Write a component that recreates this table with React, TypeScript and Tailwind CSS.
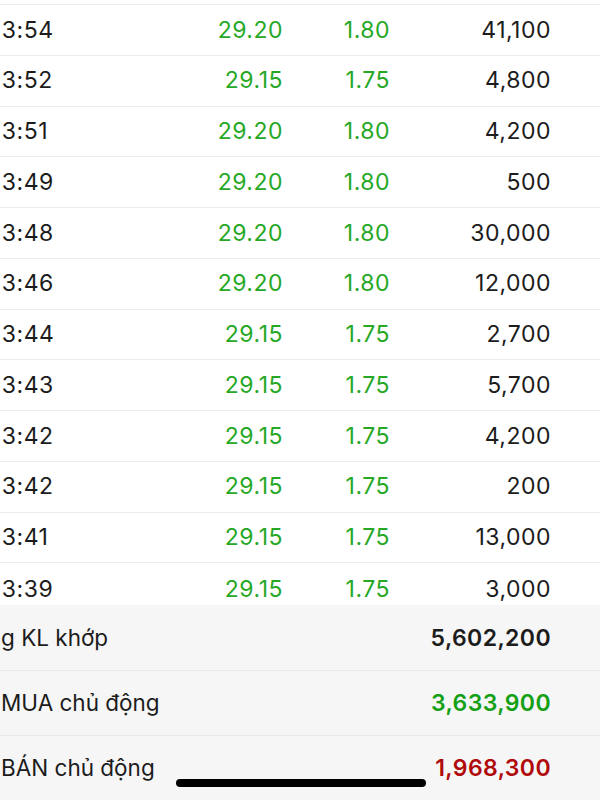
const rows = [
	{ time: "13:54", price: "29.20", change: "1.80", vol: "41,100" },
	{ time: "13:52", price: "29.15", change: "1.75", vol: "4,800" },
	{ time: "13:51", price: "29.20", change: "1.80", vol: "4,200" },
	{ time: "13:49", price: "29.20", change: "1.80", vol: "500" },
	{ time: "13:48", price: "29.20", change: "1.80", vol: "30,000" },
	{ time: "13:46", price: "29.20", change: "1.80", vol: "12,000" },
	{ time: "13:44", price: "29.15", change: "1.75", vol: "2,700" },
	{ time: "13:43", price: "29.15", change: "1.75", vol: "5,700" },
	{ time: "13:42", price: "29.15", change: "1.75", vol: "4,200" },
	{ time: "13:42", price: "29.15", change: "1.75", vol: "200" },
	{ time: "13:41", price: "29.15", change: "1.75", vol: "13,000" },
	{ time: "13:39", price: "29.15", change: "1.75", vol: "3,000" },
]

const summary = [
	{ label: "g KL khớp", value: "5,602,200", color: "text-[#1c1c1c]" },
	{ label: "MUA chủ động", value: "3,633,900", color: "text-[#14a014]" },
	{ label: "BÁN chủ động", value: "1,968,300", color: "text-[#b00a0a]" },
]

export default function App() {
	return (
		<div className="relative w-[600px] h-[800px] overflow-hidden bg-white text-[#1c1c1c] font-['Inter','Liberation_Sans',sans-serif]">
			<div className="pt-[4px]">
				{rows.map((r, i) => (
					<div
						key={i}
						className={`flex items-center border-t border-[#ececec] text-[23px] tracking-[0.5px] ${i === rows.length - 1 ? "h-[43px] pt-[9px]" : "h-[50.75px]"}`}
					>
						<div className="w-[200px] ml-[-8px]">{r.time}</div>
						<div className="w-[83px] text-right text-[#26a826] ml-[8px]">{r.price}</div>
						<div className="w-[107px] text-right text-[#26a826]">{r.change}</div>
						<div className="w-[161px] text-right">{r.vol}</div>
					</div>
				))}
			</div>
			<div className="bg-[#f6f6f6]">
				{summary.map((s, i) => (
					<div key={i} className={`flex items-center justify-between h-[65px] pr-[49px] text-[22.5px] ${i > 0 ? "border-t border-[#e9e9e9]" : ""}`}>
						<div className="pl-[1px]">{s.label}</div>
						<div className={`font-semibold text-[23px] tracking-[0.4px] ${s.color}`}>{s.value}</div>
					</div>
				))}
			</div>
			<div className="absolute left-[176px] top-[779px] w-[250px] h-[8px] rounded-full bg-black" />
		</div>
	)
}
